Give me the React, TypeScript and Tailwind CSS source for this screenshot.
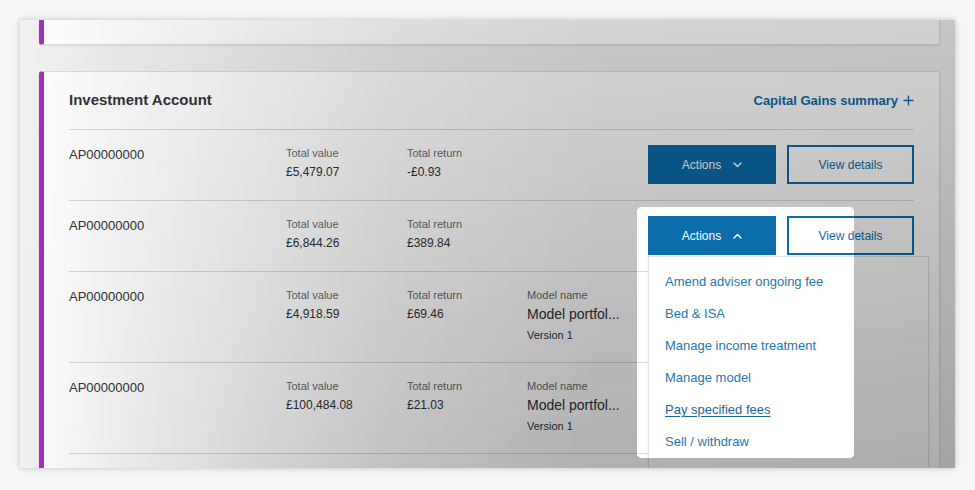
import React from "react";

const BLUE = "#0b6dab";

function ChevronDown() {
  return (
    <svg width="9" height="6" viewBox="0 0 9 6" fill="none" className="ml-[12px]">
      <polyline points="1,1 4.5,4.5 8,1" stroke="white" strokeWidth="1.5" strokeLinecap="round" strokeLinejoin="round" />
    </svg>
  );
}

function ChevronUp() {
  return (
    <svg width="9" height="6" viewBox="0 0 9 6" fill="none" className="ml-[12px]">
      <polyline points="1,5 4.5,1.5 8,5" stroke="white" strokeWidth="1.5" strokeLinecap="round" strokeLinejoin="round" />
    </svg>
  );
}

function Stat({ label, value }: { label: string; value: string }) {
  return (
    <div className="flex flex-col">
      <span className="text-[11px] leading-4 text-[#666a6e]">{label}</span>
      <span className="mt-[2px] text-[12px] leading-[18px] text-[#2f3236]">{value}</span>
    </div>
  );
}

function Buttons({ open }: { open?: boolean }) {
  return (
    <div className="ml-auto flex gap-[11px]">
      <div className="flex h-[39px] w-[128px] items-center justify-center bg-[#0b6dab] text-[12px] text-white">
        Actions
        {open ? <ChevronUp /> : <ChevronDown />}
      </div>
      <div className="flex h-[39px] w-[127px] items-center justify-center border-2 border-[#0b6dab] bg-white text-[12px] text-[#0b6dab]">
        View details
      </div>
    </div>
  );
}

type Row = { value: string; ret: string; model?: boolean; open?: boolean };

const rows: Row[] = [
  { value: "£5,479.07", ret: "-£0.93" },
  { value: "£6,844.26", ret: "£389.84", open: true },
  { value: "£4,918.59", ret: "£69.46", model: true },
  { value: "£100,484.08", ret: "£21.03", model: true },
];

const menu = [
  "Amend adviser ongoing fee",
  "Bed & ISA",
  "Manage income treatment",
  "Manage model",
  "Pay specified fees",
  "Sell / withdraw",
];

function Scene({ dim }: { dim: boolean }) {
  return (
    <div className="h-[490px] w-[975px] bg-[#f5f6f8] pl-5 pt-5 font-['Liberation_Sans',Arial,sans-serif]">
      <div className="relative h-[448px] w-[935px] overflow-hidden bg-[#f1f1f2] shadow-[0_0_6px_rgba(0,0,0,0.22)]">
        <div className="ml-[19px] mr-[15px] h-[25px] rounded-b-[3px] border border-t-0 border-l-[5px] border-[#dcdcdc] border-l-[#a62dbd] bg-white shadow-[0_1px_2px_rgba(0,0,0,0.08)]" />
        <div className="relative ml-[19px] mr-[15px] mt-[26px] rounded-[3px] border border-l-[5px] border-[#dcdcdc] border-l-[#a62dbd] bg-white px-[25px] shadow-[0_1px_2px_rgba(0,0,0,0.08)]">
          <div className="flex h-[58px] items-center justify-between border-b border-[#dadada]">
            <span className="text-[15px] font-bold text-[#33373b]">Investment Account</span>
            <span className="flex items-center text-[13px] font-bold text-[#0b6dab]">
              Capital Gains summary
              <svg width="11" height="11" viewBox="0 0 11 11" className="ml-[5px]">
                <path d="M5.5 0.5v10M0.5 5.5h10" stroke={BLUE} strokeWidth="1.4" />
              </svg>
            </span>
          </div>
          {rows.map((r, i) => (
            <div key={i} className="flex items-start border-b border-[#dadada] pb-4 pt-[15px]">
              <div className="w-[217px] text-[13px] leading-5 text-[#2f3236]">AP00000000</div>
              <div className="w-[121px]">
                <Stat label="Total value" value={r.value} />
              </div>
              <div className="w-[120px]">
                <Stat label="Total return" value={r.ret} />
              </div>
              {r.model && (
                <div className="flex flex-col pb-[3px]">
                  <span className="text-[11px] leading-4 text-[#666a6e]">Model name</span>
                  <span className="mt-[2px] text-[14px] leading-[18px] text-[#2f3236]">Model portfol...</span>
                  <span className="mt-[4px] text-[11px] leading-4 text-[#2f3236]">Version 1</span>
                </div>
              )}
              <Buttons open={r.open} />
            </div>
          ))}
          <div className="h-[40px]" />
          <div className="absolute left-[604px] top-[184px] h-[240px] w-[281px] border border-[#e2e2e2] bg-white pt-[9px] shadow-[0_2px_4px_rgba(0,0,0,0.06)]">
            {menu.map((m) => (
              <div
                key={m}
                className={`px-4 py-[6px] text-[13px] leading-5 ${
                  m === "Pay specified fees" ? "text-[#1b6597] underline underline-offset-2" : "text-[#2277b0]"
                }`}
              >
                {m}
              </div>
            ))}
          </div>
        </div>
        {dim && (
          <>
            <div className="pointer-events-none absolute inset-0 bg-[linear-gradient(to_right,rgba(0,0,0,0)_0%,rgba(0,0,0,0.035)_9%,rgba(0,0,0,0.13)_40%,rgba(0,0,0,0.17)_62%,rgba(0,0,0,0.18)_100%)]" />
            <div className="pointer-events-none absolute inset-0 bg-[linear-gradient(to_right,rgba(0,0,0,0)_0%,rgba(0,0,0,0.035)_9%,rgba(0,0,0,0.13)_40%,rgba(0,0,0,0.17)_62%,rgba(0,0,0,0.17)_100%)] [mask-image:linear-gradient(to_bottom,transparent,black)]" />
          </>
        )}
      </div>
    </div>
  );
}

export default function App() {
  return (
    <div className="relative h-[490px] w-[975px] overflow-hidden bg-[#f5f6f8]">
      <Scene dim />
      <div className="absolute left-[637px] top-[207px] h-[251px] w-[217px] overflow-hidden rounded-[5px] bg-white">
        <div className="absolute left-[-637px] top-[-207px]">
          <Scene dim={false} />
        </div>
      </div>
    </div>
  );
}
